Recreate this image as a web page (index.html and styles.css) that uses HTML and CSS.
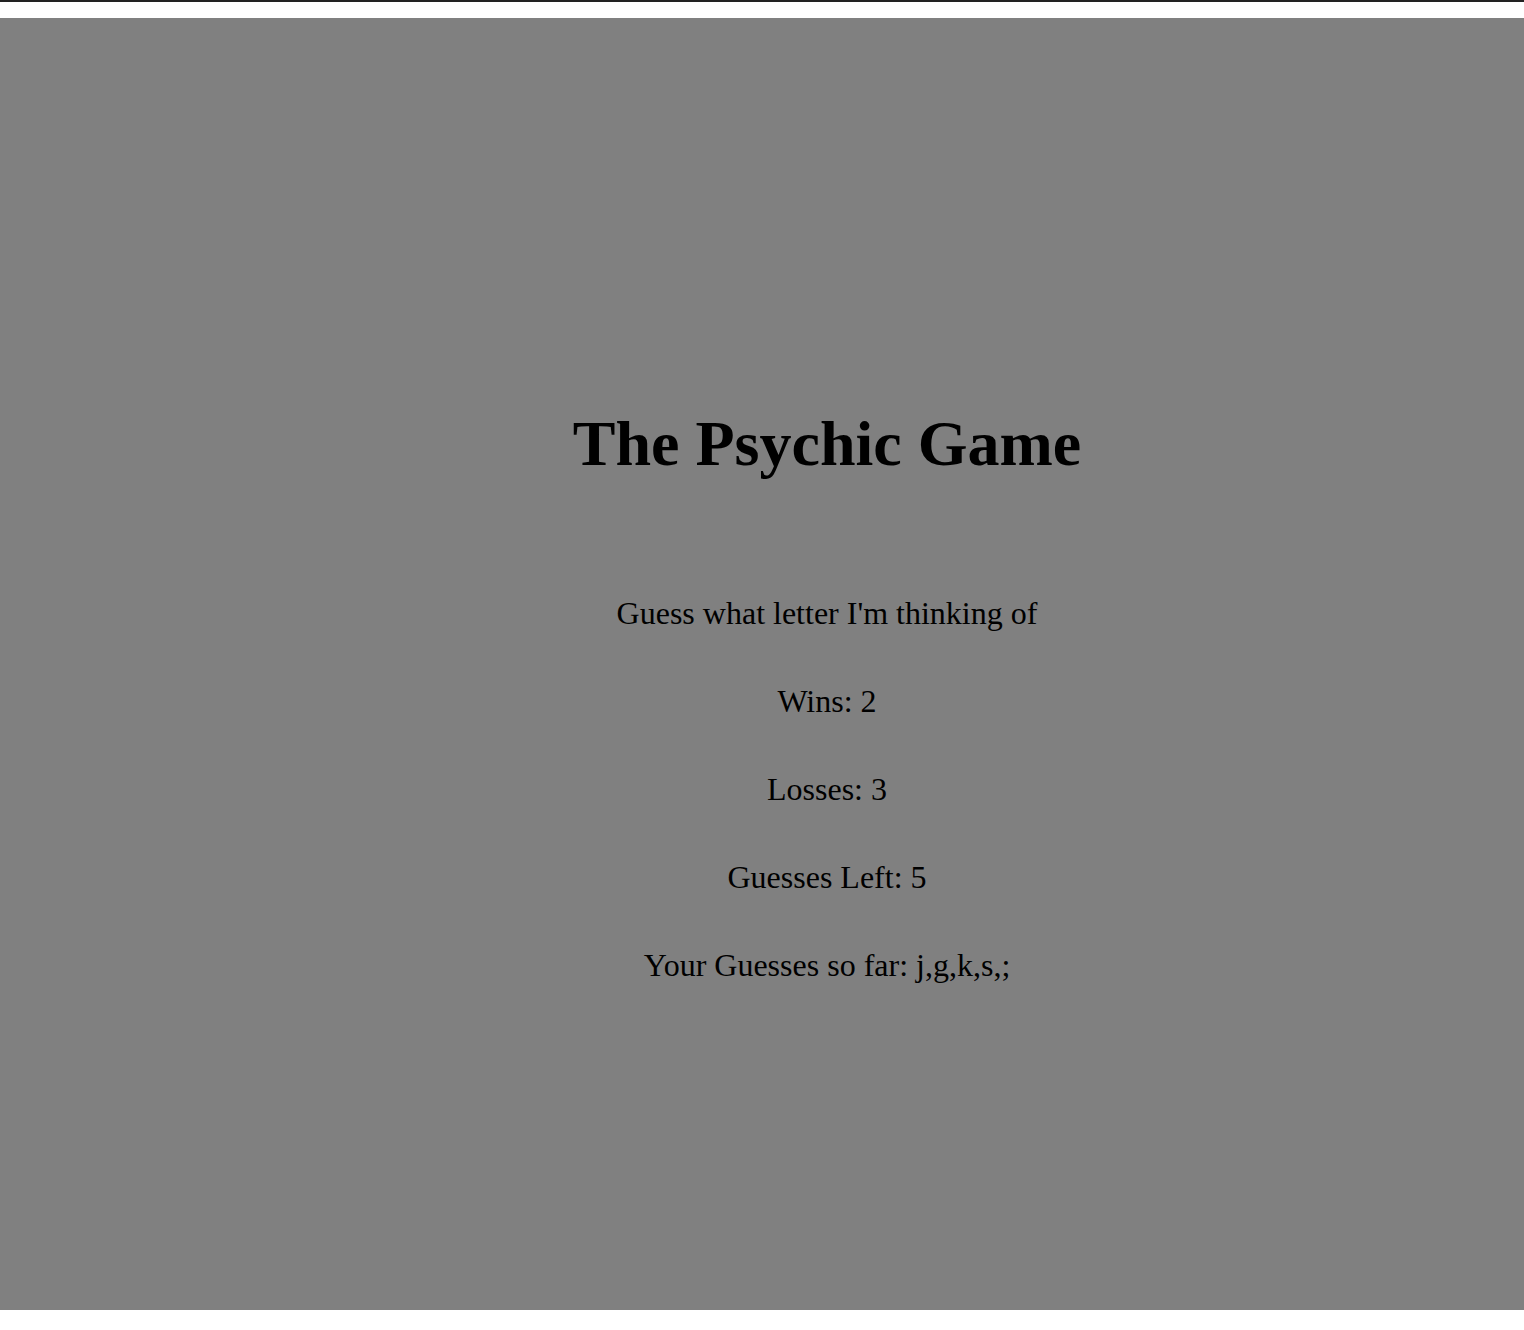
FILE: index.html
```html
<!DOCTYPE html>
<html lang="en">
<head>
<meta charset="utf-8">
<title>The Psychic Game</title>
<link rel="stylesheet" href="styles.css">
</head>
<body>
<div class="topbar"></div>
<main class="game">
  <h1 class="title">The Psychic Game</h1>
  <p class="line">Guess what letter I'm thinking of</p>
  <p class="line">Wins: 2</p>
  <p class="line">Losses: 3</p>
  <p class="line">Guesses Left: 5</p>
  <p class="line">Your Guesses so far: j,g,k,s,;</p>
</main>
</body>
</html>
```
FILE: styles.css
```css
html, body {
  margin: 0;
  padding: 0;
  background: #ffffff;
}
body {
  font-family: "Liberation Serif", "Times New Roman", serif;
  color: #000;
}
.topbar {
  height: 2px;
  background: #222222;
  margin-bottom: 16px;
}
.game {
  background: #808080;
  height: 1292px;
  box-sizing: border-box;
  padding: 389px 0 0 130px;
  text-align: center;
}
.title {
  font-size: 64px;
  font-weight: bold;
  line-height: 74px;
  margin: 0 0 88px;
}
.line {
  font-size: 32px;
  line-height: 88px;
  margin: 0;
}
```
